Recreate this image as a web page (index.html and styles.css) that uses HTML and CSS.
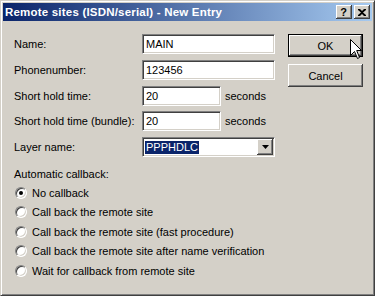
FILE: index.html
```html
<!DOCTYPE html>
<html>
<head>
<meta charset="utf-8">
<link rel="stylesheet" href="styles.css">
</head>
<body>
<div class="window">
  <div class="titlebar">
    <span class="title">Remote sites (ISDN/serial) - New Entry</span>
    <div class="tb-buttons">
      <span class="tb-btn help">?</span>
      <span class="tb-btn close"><svg width="8" height="7" viewBox="0 0 8 7"><path d="M0 0h2l2 2 2-2h2v1L5 3.5 8 6v1H6L4 5 2 7H0V6l3-2.5L0 1z" fill="#000"/></svg></span>
    </div>
  </div>
  <div class="client">
    <div class="top">
      <div class="fields">
        <div class="row"><span class="label">Name:</span><div class="input wide">MAIN</div></div>
        <div class="row"><span class="label">Phonenumber:</span><div class="input wide">123456</div></div>
        <div class="row"><span class="label">Short hold time:</span><div class="input short">20</div><span class="unit">seconds</span></div>
        <div class="row"><span class="label">Short hold time (bundle):</span><div class="input short">20</div><span class="unit">seconds</span></div>
        <div class="row"><span class="label">Layer name:</span><div class="input wide combo"><span class="sel">PPPHDLC</span><span class="drop"><svg width="7" height="4" viewBox="0 0 7 4"><path d="M0 0h7L3.5 4z" fill="#000"/></svg></span></div></div>
      </div>
      <div class="buttons">
        <div class="btn default"><span>OK</span></div>
        <div class="btn"><span>Cancel</span></div>
      </div>
    </div>
    <div class="callback">
      <div class="group-label">Automatic callback:</div>
      <div class="radio"><span class="dot checked"></span><span>No callback</span></div>
      <div class="radio"><span class="dot"></span><span>Call back the remote site</span></div>
      <div class="radio"><span class="dot"></span><span>Call back the remote site (fast procedure)</span></div>
      <div class="radio"><span class="dot"></span><span>Call back the remote site after name verification</span></div>
      <div class="radio"><span class="dot"></span><span>Wait for callback from remote site</span></div>
    </div>
  </div>
  <svg class="cursor" width="13" height="21" viewBox="0 0 13 21"><path d="M0.5 0.5V16.5L4.5 12.5L7.5 19.5L9.5 18.5L6.7 11.5H11.5Z" fill="#fff" stroke="#000" stroke-width="1" stroke-linejoin="miter"/></svg>
</div>
</body>
</html>
```
FILE: styles.css
```css
* { box-sizing: border-box; }
html, body { margin: 0; padding: 0; }
body {
  width: 375px;
  height: 296px;
  overflow: hidden;
  font-family: "Liberation Sans", Arial, sans-serif;
  font-size: 11px;
  color: #000;
  background: #d4d0c8;
}
.window {
  position: relative;
  width: 375px;
  height: 296px;
  background: #d4d0c8;
  border-style: solid;
  border-width: 1px;
  border-color: #d4d0c8 #404040 #404040 #d4d0c8;
  box-shadow: inset 1px 1px 0 #fff, inset -1px -1px 0 #808080;
  padding: 2px;
  display: flex;
  flex-direction: column;
}
.titlebar {
  height: 18px;
  background: linear-gradient(to right, #0a246a, #a6caf0);
  display: flex;
  align-items: center;
  justify-content: space-between;
  padding: 0 2px 0 2px;
}
.title {
  color: #fff;
  font-weight: bold;
  font-size: 11.5px;
  letter-spacing: 0.2px;
  line-height: 18px;
}
.tb-buttons {
  display: flex;
  gap: 2px;
}
.tb-btn {
  width: 16px;
  height: 14px;
  background: #d4d0c8;
  box-shadow: inset -1px -1px 0 #404040, inset 1px 1px 0 #fff, inset -2px -2px 0 #808080;
  display: flex;
  align-items: center;
  justify-content: center;
  font-weight: bold;
  font-size: 11px;
  line-height: 14px;
  padding-right: 1px;
}
.client {
  flex: 1;
  padding: 13px 0 0 11px;
}
.top {
  display: flex;
}
.fields {
  display: flex;
  flex-direction: column;
  gap: 5.75px;
  width: 273px;
}
.row {
  display: flex;
  align-items: center;
  height: 20px;
}
.label {
  width: 128px;
  flex-shrink: 0;
}
.input {
  height: 20px;
  background: #fff;
  border-style: solid;
  border-width: 1px;
  border-color: #808080 #fff #fff #808080;
  box-shadow: inset 1px 1px 0 #404040, inset -1px -1px 0 #d4d0c8;
  padding-left: 3px;
  line-height: 18px;
  display: flex;
  align-items: center;
}
.wide { width: 133px; }
.short { width: 79px; }
.unit { margin-left: 4px; }
.combo {
  justify-content: space-between;
  padding-right: 1px;
}
.sel {
  background: #0a246a;
  color: #fff;
  line-height: 13px;
  padding: 0 1px;
  margin-left: -1px;
}
.drop {
  width: 16px;
  height: 16px;
  background: #d4d0c8;
  box-shadow: inset -1px -1px 0 #404040, inset 1px 1px 0 #fff, inset -2px -2px 0 #808080;
  display: flex;
  align-items: center;
  justify-content: center;
}
.buttons {
  margin-left: 1px;
  display: flex;
  flex-direction: column;
  gap: 7px;
}
.btn {
  width: 75px;
  height: 23px;
  background: #d4d0c8;
  box-shadow: inset -1px -1px 0 #404040, inset 1px 1px 0 #fff, inset -2px -2px 0 #808080;
  display: flex;
  align-items: center;
  justify-content: center;
}
.btn.default {
  border: 1px solid #000;
  box-shadow: inset -1px -1px 0 #404040, inset 1px 1px 0 #fff, inset -2px -2px 0 #808080;
}
.callback {
  margin-top: 11px;
  padding-left: 0;
}
.group-label {
  height: 13px;
  line-height: 13px;
  margin-bottom: 2px;
}
.radio {
  height: 19.5px;
  display: flex;
  align-items: center;
}
.dot {
  width: 12px;
  height: 12px;
  margin-left: 1px;
  margin-right: 5px;
  border-radius: 50%;
  background: #fff;
  border-style: solid;
  border-width: 1px;
  border-color: #808080 #fff #fff #808080;
  box-shadow: inset 1px 1px 0 #404040, inset -1px -1px 0 #d4d0c8;
  position: relative;
}
.dot.checked::after {
  content: "";
  position: absolute;
  left: 3px;
  top: 3px;
  width: 4px;
  height: 4px;
  border-radius: 50%;
  background: #000;
}
.cursor {
  position: absolute;
  left: 349px;
  top: 38px;
}
```
